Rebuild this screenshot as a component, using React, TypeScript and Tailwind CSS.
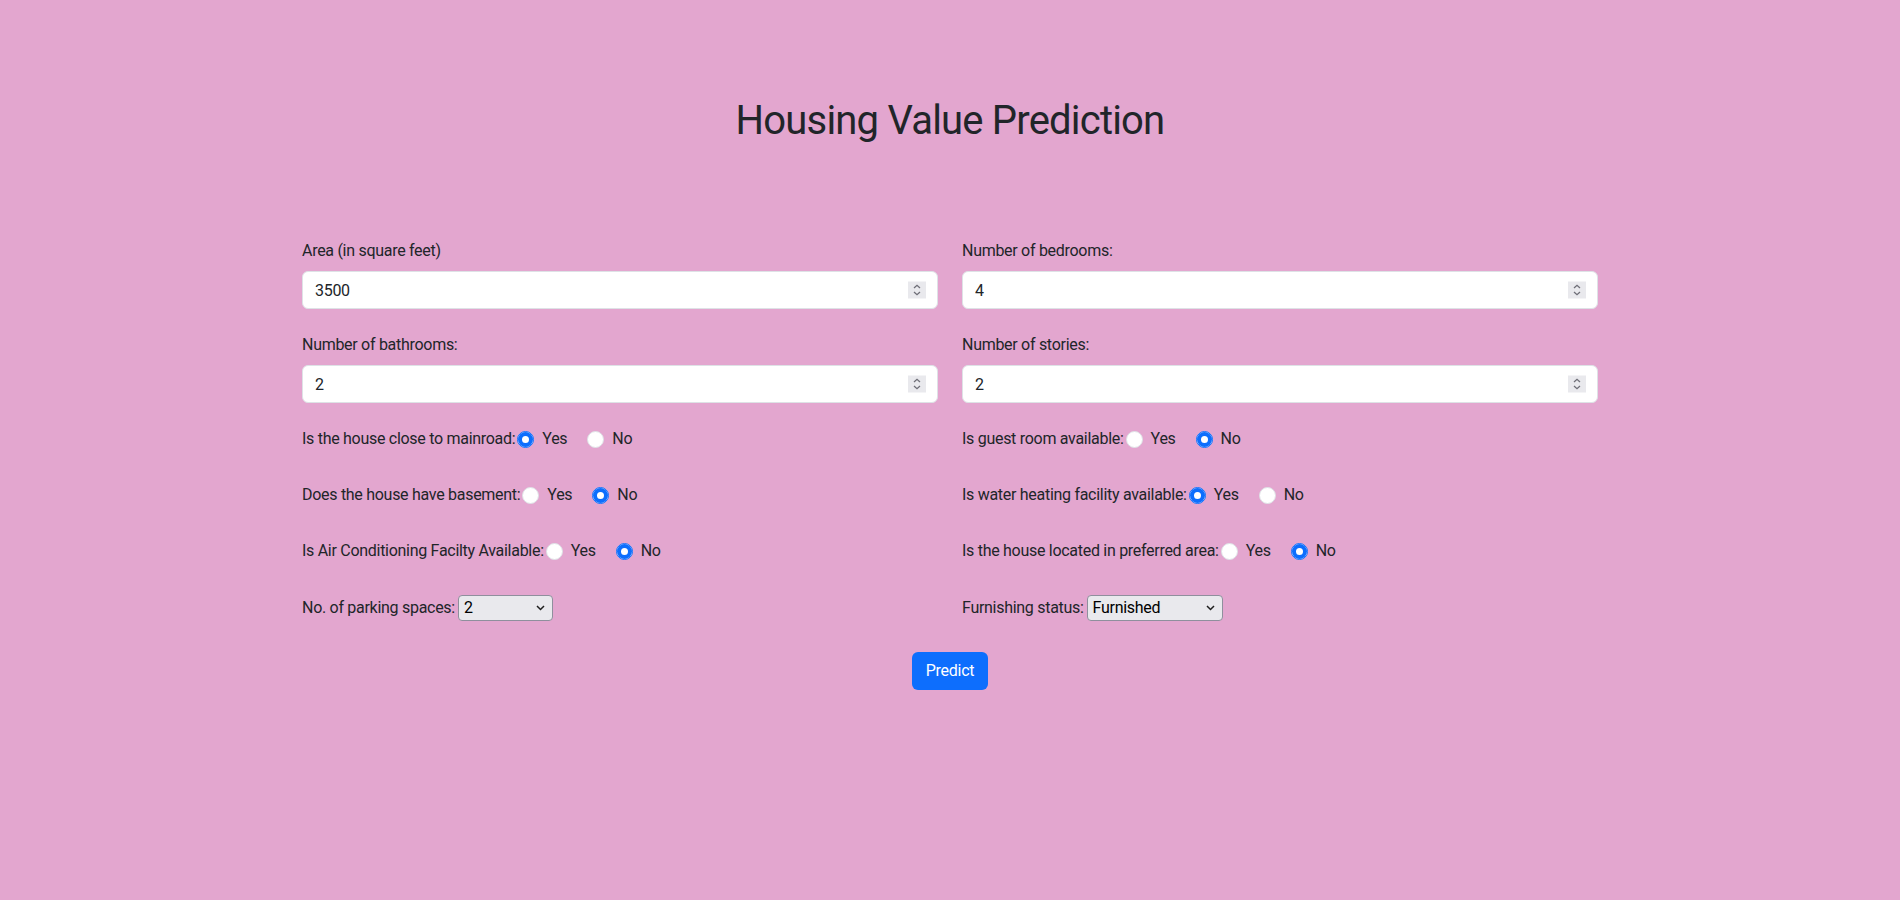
import { useState } from "react";

const FONT = { fontFamily: "Roboto, 'Noto Sans', sans-serif" };

function Spinner() {
  return (
    <div className="pointer-events-none absolute right-3 top-1/2 -translate-y-1/2 w-[18px] h-[17px] bg-[#e9e9ed] flex items-center justify-center">
      <svg width="10" height="13" viewBox="0 0 10 13" fill="none" stroke="#6f6f78" strokeWidth="1.3">
        <path d="M2 4.5 L5 1.8 L8 4.5" />
        <path d="M2 8.5 L5 11.2 L8 8.5" />
      </svg>
    </div>
  );
}

function NumberField({ label, value, onChange }: { label: string; value: string; onChange: (v: string) => void }) {
  return (
    <div className="flex flex-col">
      <label className="text-base leading-6 mb-2">{label}</label>
      <div className="relative">
        <input
          type="text"
          inputMode="numeric"
          className="w-full h-[38px] px-3 bg-white border border-[#dee2e6] rounded-[6px] text-base text-[#212529] outline-none"
          value={value}
          onChange={(e) => onChange(e.target.value.replace(/[^\d]/g, ""))}
        />
        <Spinner />
      </div>
    </div>
  );
}

function Radio({ name, checked, onChange, className = "" }: { name: string; checked: boolean; onChange: () => void; className?: string }) {
  return (
    <input
      type="radio"
      name={name}
      checked={checked}
      onChange={onChange}
      className={`appearance-none w-[17px] h-[17px] shrink-0 rounded-full bg-white border border-[#dee2e6] checked:border-[#0d6efd] checked:shadow-[inset_0_0_0_4px_#0d6efd] ${className}`}
    />
  );
}

function YesNo({ label, name, value, onChange }: { label: string; name: string; value: string; onChange: (v: string) => void }) {
  return (
    <div className="flex items-center h-6">
      <span>{label}</span>
      <Radio name={name} checked={value === "yes"} onChange={() => onChange("yes")} className="ml-[2px]" />
      <span className="ml-2">Yes</span>
      <Radio name={name} checked={value === "no"} onChange={() => onChange("no")} className="ml-5" />
      <span className="ml-2">No</span>
    </div>
  );
}

function Select({ value, onChange, options, width }: { value: string; onChange: (v: string) => void; options: string[]; width: string }) {
  return (
    <div className={`relative ml-[3px] ${width}`}>
      <select
        className="appearance-none w-full h-[26px] pl-[5px] pr-6 bg-[#e9e9ed] border border-[#8f8f9d] rounded-[4px] text-base leading-6 text-black outline-none"
        value={value}
        onChange={(e) => onChange(e.target.value)}
      >
        {options.map((o) => (
          <option key={o} value={o}>
            {o}
          </option>
        ))}
      </select>
      <svg
        className="pointer-events-none absolute right-[8px] top-1/2 -translate-y-1/2"
        width="9"
        height="6"
        viewBox="0 0 9 6"
        fill="none"
        stroke="#1f1f1f"
        strokeWidth="1.5"
      >
        <path d="M1 1 L4.5 4.5 L8 1" />
      </svg>
    </div>
  );
}

export default function App() {
  const [area, setArea] = useState("3500");
  const [bedrooms, setBedrooms] = useState("4");
  const [bathrooms, setBathrooms] = useState("2");
  const [stories, setStories] = useState("2");
  const [mainroad, setMainroad] = useState("yes");
  const [guest, setGuest] = useState("no");
  const [basement, setBasement] = useState("no");
  const [water, setWater] = useState("yes");
  const [ac, setAc] = useState("no");
  const [pref, setPref] = useState("no");
  const [parking, setParking] = useState("2");
  const [furnish, setFurnish] = useState("Furnished");

  return (
    <div className="min-h-screen bg-[#e3a6cf] text-[#212529] text-base leading-6 tracking-[-0.018em]" style={FONT}>
      <div className="mx-auto w-[1320px] px-3">
        <h1 className="pt-[97px] text-center text-[40px] leading-[48px] font-normal tracking-[-0.02em]">
          Housing Value Prediction
        </h1>

        <form className="mt-[94px] flex flex-col" onSubmit={(e) => e.preventDefault()}>
          <div className="grid grid-cols-2 gap-x-6">
            <NumberField label="Area (in square feet)" value={area} onChange={setArea} />
            <NumberField label="Number of bedrooms:" value={bedrooms} onChange={setBedrooms} />
          </div>
          <div className="grid grid-cols-2 gap-x-6 mt-6">
            <NumberField label="Number of bathrooms:" value={bathrooms} onChange={setBathrooms} />
            <NumberField label="Number of stories:" value={stories} onChange={setStories} />
          </div>
          <div className="grid grid-cols-2 gap-x-6 mt-6">
            <YesNo label="Is the house close to mainroad:" name="mainroad" value={mainroad} onChange={setMainroad} />
            <YesNo label="Is guest room available:" name="guest" value={guest} onChange={setGuest} />
          </div>
          <div className="grid grid-cols-2 gap-x-6 mt-8">
            <YesNo label="Does the house have basement:" name="basement" value={basement} onChange={setBasement} />
            <YesNo label="Is water heating facility available:" name="water" value={water} onChange={setWater} />
          </div>
          <div className="grid grid-cols-2 gap-x-6 mt-8">
            <YesNo label="Is Air Conditioning Facilty Available:" name="ac" value={ac} onChange={setAc} />
            <YesNo label="Is the house located in preferred area:" name="pref" value={pref} onChange={setPref} />
          </div>
          <div className="grid grid-cols-2 gap-x-6 mt-[32px]">
            <div className="flex items-center h-[26px]">
              <span>No. of parking spaces:</span>
              <Select value={parking} onChange={setParking} options={["0", "1", "2", "3"]} width="w-[95px]" />
            </div>
            <div className="flex items-center h-[26px]">
              <span>Furnishing status:</span>
              <Select
                value={furnish}
                onChange={setFurnish}
                options={["Furnished", "Semi-furnished", "Unfurnished"]}
                width="w-[136px]"
              />
            </div>
          </div>
          <div className="flex justify-center mt-[31px]">
            <button type="submit" className="h-[38px] px-[14px] rounded-[6px] bg-[#0d6efd] text-white text-base">
              Predict
            </button>
          </div>
        </form>
      </div>
    </div>
  );
}
